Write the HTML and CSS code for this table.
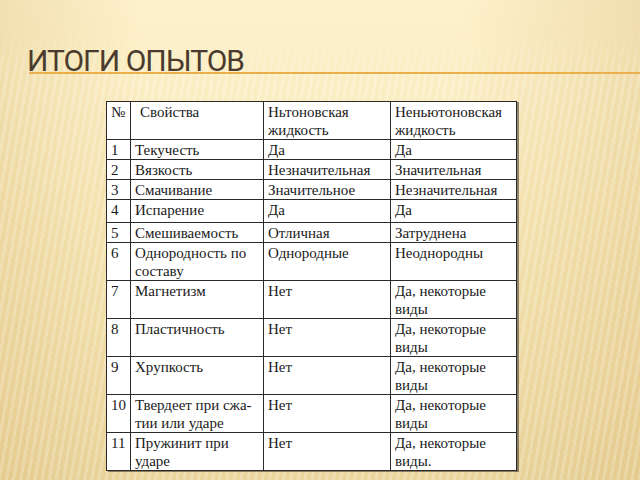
FILE: index.html
```html
<!DOCTYPE html>
<html lang="ru">
<head>
<meta charset="utf-8">
<title>Итоги опытов</title>
<link rel="stylesheet" href="styles.css">
</head>
<body>
<div class="slide">
  <div class="stripes"></div>
  <h1 class="title"><span>ИТОГИ ОПЫТОВ</span></h1>
  <div class="table-wrap">
    <table class="results">
      <colgroup>
        <col class="c-num"><col class="c-prop"><col class="c-newt"><col class="c-non">
      </colgroup>
      <tr class="h37">
        <td>№</td><td class="indent">Свойства</td><td>Ньтоновская<br>жидкость</td><td>Неньютоновская<br>жидкость</td>
      </tr>
      <tr class="h20"><td>1</td><td>Текучесть</td><td>Да</td><td>Да</td></tr>
      <tr class="h19"><td>2</td><td>Вязкость</td><td>Незначительная</td><td>Значительная</td></tr>
      <tr class="h19"><td>3</td><td>Смачивание</td><td>Значительное</td><td>Незначительная</td></tr>
      <tr class="h23"><td>4</td><td>Испарение</td><td>Да</td><td>Да</td></tr>
      <tr class="h19"><td>5</td><td>Смешиваемость</td><td>Отличная</td><td>Затруднена</td></tr>
      <tr class="h38"><td>6</td><td>Однородность по<br>составу</td><td>Однородные</td><td>Неоднородны</td></tr>
      <tr class="h37"><td>7</td><td>Магнетизм</td><td>Нет</td><td>Да, некоторые<br>виды</td></tr>
      <tr class="h38"><td>8</td><td>Пластичность</td><td>Нет</td><td>Да, некоторые<br>виды</td></tr>
      <tr class="h37"><td>9</td><td>Хрупкость</td><td>Нет</td><td>Да, некоторые<br>виды</td></tr>
      <tr class="h38"><td>10</td><td>Твердеет при сжа-<br>тии или ударе</td><td>Нет</td><td>Да, некоторые<br>виды</td></tr>
      <tr class="h37"><td>11</td><td>Пружинит при<br>ударе</td><td>Нет</td><td>Да, некоторые<br>виды.</td></tr>
    </table>
  </div>
</div>
</body>
</html>
```
FILE: styles.css
```css
html, body {
  margin: 0;
  padding: 0;
}
body {
  width: 640px;
  height: 480px;
  overflow: hidden;
}
.slide {
  position: relative;
  width: 640px;
  height: 480px;
  box-sizing: border-box;
  padding-top: 44px;
  background:
    linear-gradient(90deg, rgba(214, 180, 110, 0.28) 0%, rgba(214, 180, 110, 0) 22%, rgba(214, 180, 110, 0) 72%, rgba(214, 180, 110, 0.30) 100%),
    linear-gradient(180deg, #fdf1cc 0%, #fcefc6 12%, #f7e6b5 45%, #f0dca6 80%, #ead59c 100%);
}
.stripes {
  position: absolute;
  left: 0;
  top: 24px;
  width: 640px;
  height: 456px;
  background: repeating-linear-gradient(100deg, rgba(255, 255, 255, 0.22) 0 3px, rgba(255, 255, 255, 0) 3px 7px);
  -webkit-mask-image: linear-gradient(180deg, rgba(0,0,0,0) 0%, rgba(0,0,0,1) 12%, rgba(0,0,0,1) 100%);
  mask-image: linear-gradient(180deg, rgba(0,0,0,0) 0%, rgba(0,0,0,1) 12%, rgba(0,0,0,1) 100%);
}
.title {
  position: relative;
  margin: 0 0 0 29px;
  height: 28px;
  border-bottom: 2px solid #e9b04c;
  font-family: Roboto, "Noto Sans", sans-serif;
  font-weight: 400;
  font-size: 30px;
  line-height: 28px;
  letter-spacing: -1px;
  color: #4a3b2e;
  white-space: nowrap;
}
.title span {
  display: inline-block;
  margin-left: -2px;
  transform: translateY(3px);
}
.table-wrap {
  position: relative;
  margin: 27px 0 0 106px;
  width: 410px;
}
.results {
  border-collapse: collapse;
  table-layout: fixed;
  width: 410px;
  background: #fff;
  box-shadow: 2px 1px 0 rgba(60, 50, 40, 0.55);
}
.c-num { width: 24px; }
.c-prop { width: 133px; }
.c-newt { width: 127px; }
.c-non { width: 126px; }
.results td {
  border: 1px solid #2a2a2a;
  padding: 1px 3px 0 4px;
  vertical-align: top;
  white-space: nowrap;
  overflow: hidden;
  font-family: "Liberation Serif", "Times New Roman", serif;
  font-size: 15px;
  line-height: 18px;
  color: #1a1a1a;
}
.results td.indent {
  padding-left: 9px;
}
.h19 { height: 19px; }
.h20 { height: 20px; }
.h23 { height: 23px; }
.h37 { height: 37px; }
.h38 { height: 38px; }
```
